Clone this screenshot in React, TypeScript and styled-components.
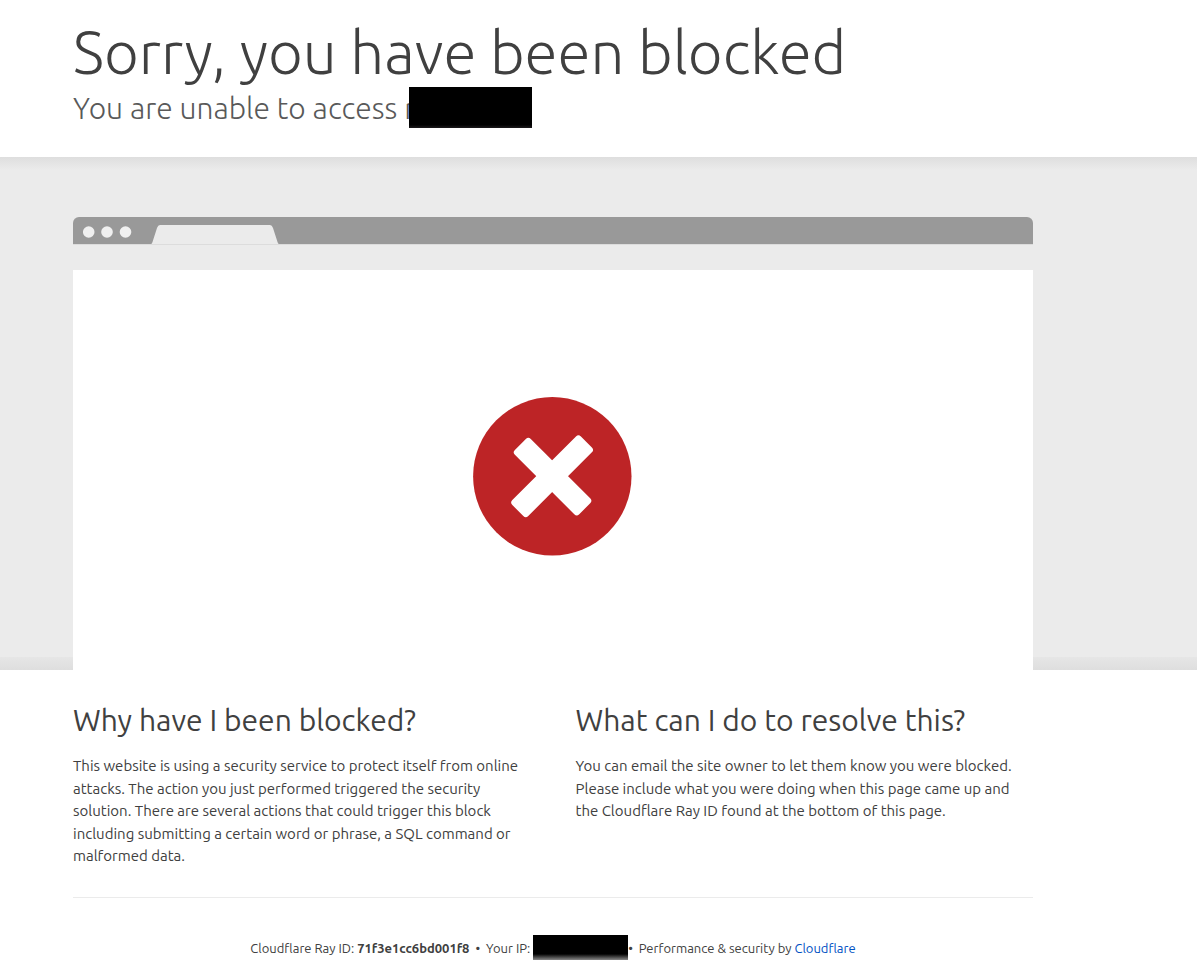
import React from "react";
import styled, { createGlobalStyle } from "styled-components";

const GlobalStyle = createGlobalStyle`
  * { box-sizing: border-box; }
  body {
    margin: 0;
    background: #fff;
    color: #404040;
    font-family: Ubuntu, "Noto Sans", "Open Sans", sans-serif;
    font-size: 15px;
    line-height: 1.5;
  }
`;

const Container = styled.div`
  max-width: 1033px;
  padding-left: 73px;
`;

const Header = styled.header`
  padding: 20px 0 28px;
`;

const Title = styled.h1`
  margin: 0;
  font-size: 60px;
  font-weight: 300;
  line-height: 64px;
`;

const Subtitle = styled.h2`
  display: flex;
  align-items: flex-start;
  margin: 0;
  padding-top: 3px;
  color: #595959;
  font-size: 30px;
  font-weight: 300;
  line-height: 42px;
`;

const Redaction = styled.span<{ $width: number; $height: number; $faded?: boolean }>`
  flex: none;
  width: ${(p) => p.$width}px;
  height: ${(p) => p.$height}px;
  background: ${(p) =>
    p.$faded ? "linear-gradient(#000 76%, #888)" : "linear-gradient(#000 92%, #1c1a1c)"};
`;

const SubtitleRedaction = styled(Redaction)`
  margin-left: -6px;
`;

const Stage = styled.section`
  padding-top: 60px;
  background:
    linear-gradient(#dedede, #ebebeb) top / 100% 13px no-repeat,
    linear-gradient(#e6e6e6, #dedede) bottom / 100% 13px no-repeat,
    #ebebeb;
`;

const BrowserBar = styled.div`
  display: flex;
  align-items: flex-end;
  height: 28px;
  padding-left: 10px;
  border-bottom: 1px solid #dcdcdc;
  border-radius: 6px 6px 0 0;
  background: #999;
`;

const Dots = styled.svg`
  display: block;
  width: 50px;
  height: 19px;
`;

const Tab = styled.svg`
  display: block;
  width: 128px;
  height: 19px;
  margin-left: 18px;
`;

const Screen = styled.div`
  display: flex;
  justify-content: center;
  height: 400px;
  margin-top: 25px;
  padding: 127px 1px 0 0;
  background: #fff;
`;

const Columns = styled.div`
  display: grid;
  grid-template-columns: 1fr 1fr;
  gap: 45px;
  padding: 30px 0 29px;
  border-bottom: 1px solid #ebebeb;
`;

const ColumnTitle = styled.h2`
  margin: 0;
  font-size: 30px;
  font-weight: 400;
  line-height: 40px;
`;

const Paragraph = styled.p`
  margin: 15px 0 0;
`;

const Footer = styled.footer`
  display: flex;
  align-items: flex-start;
  justify-content: center;
  padding: 37px 0 3px;
  font-size: 13px;
  line-height: 27px;
  white-space: pre;
`;

const Link = styled.a`
  color: #0051c3;
  text-decoration: none;
`;

export default function App() {
  return (
    <>
      <GlobalStyle />
      <Header>
        <Container>
          <Title>Sorry, you have been blocked</Title>
          <Subtitle>
            <span>You are unable to access r</span>
            <SubtitleRedaction $width={123} $height={41} />
          </Subtitle>
        </Container>
      </Header>
      <Stage>
        <Container>
          <BrowserBar>
            <Dots viewBox="0 0 50 19" fill="#f0f0f0" aria-hidden="true">
              <circle cx="5.700" cy="7" r="5.8" />
              <circle cx="24" cy="7" r="5.8" />
              <circle cx="42.500" cy="7" r="5.8" />
            </Dots>
            <Tab viewBox="0 0 128 19" fill="#ebebeb" aria-hidden="true">
              <path d="M0 19Q1 19 1.500 17L6 3Q7 0 9 0H119Q121 0 122 3L126.500 17Q127 19 128 19Z" />
            </Tab>
          </BrowserBar>
          <Screen>
            <svg width="159" height="159" viewBox="0 0 159 159" role="img" aria-label="Blocked">
              <circle cx="79.300" cy="79.300" r="79.200" fill="#bd2426" />
              <g fill="#fff">
                <rect x="68" y="31" width="22.500" height="97" rx="3.500" transform="rotate(45 79.500 79.200)" />
                <rect x="68" y="34" width="22.500" height="91" rx="3.500" transform="rotate(-45 79.500 79.200)" />
              </g>
            </svg>
          </Screen>
        </Container>
      </Stage>
      <Container>
        <Columns>
          <section>
            <ColumnTitle>Why have I been blocked?</ColumnTitle>
            <Paragraph>
              This website is using a security service to protect itself from online attacks. The
              action you just performed triggered the security solution. There are several actions
              that could trigger this block including submitting a certain word or phrase, a SQL
              command or malformed data.
            </Paragraph>
          </section>
          <section>
            <ColumnTitle>What can I do to resolve this?</ColumnTitle>
            <Paragraph>
              You can email the site owner to let them know you were blocked. Please include what
              you were doing when this page came up and the Cloudflare Ray ID found at the bottom of
              this page.
            </Paragraph>
          </section>
        </Columns>
        <Footer>
          <span>Cloudflare Ray ID: <strong>71f3e1cc6bd001f8</strong>  •  Your IP: </span>
          <Redaction $width={95} $height={25} $faded />
          <span>•  Performance &amp; security by <Link href="#cloudflare">Cloudflare</Link></span>
        </Footer>
      </Container>
    </>
  );
}
